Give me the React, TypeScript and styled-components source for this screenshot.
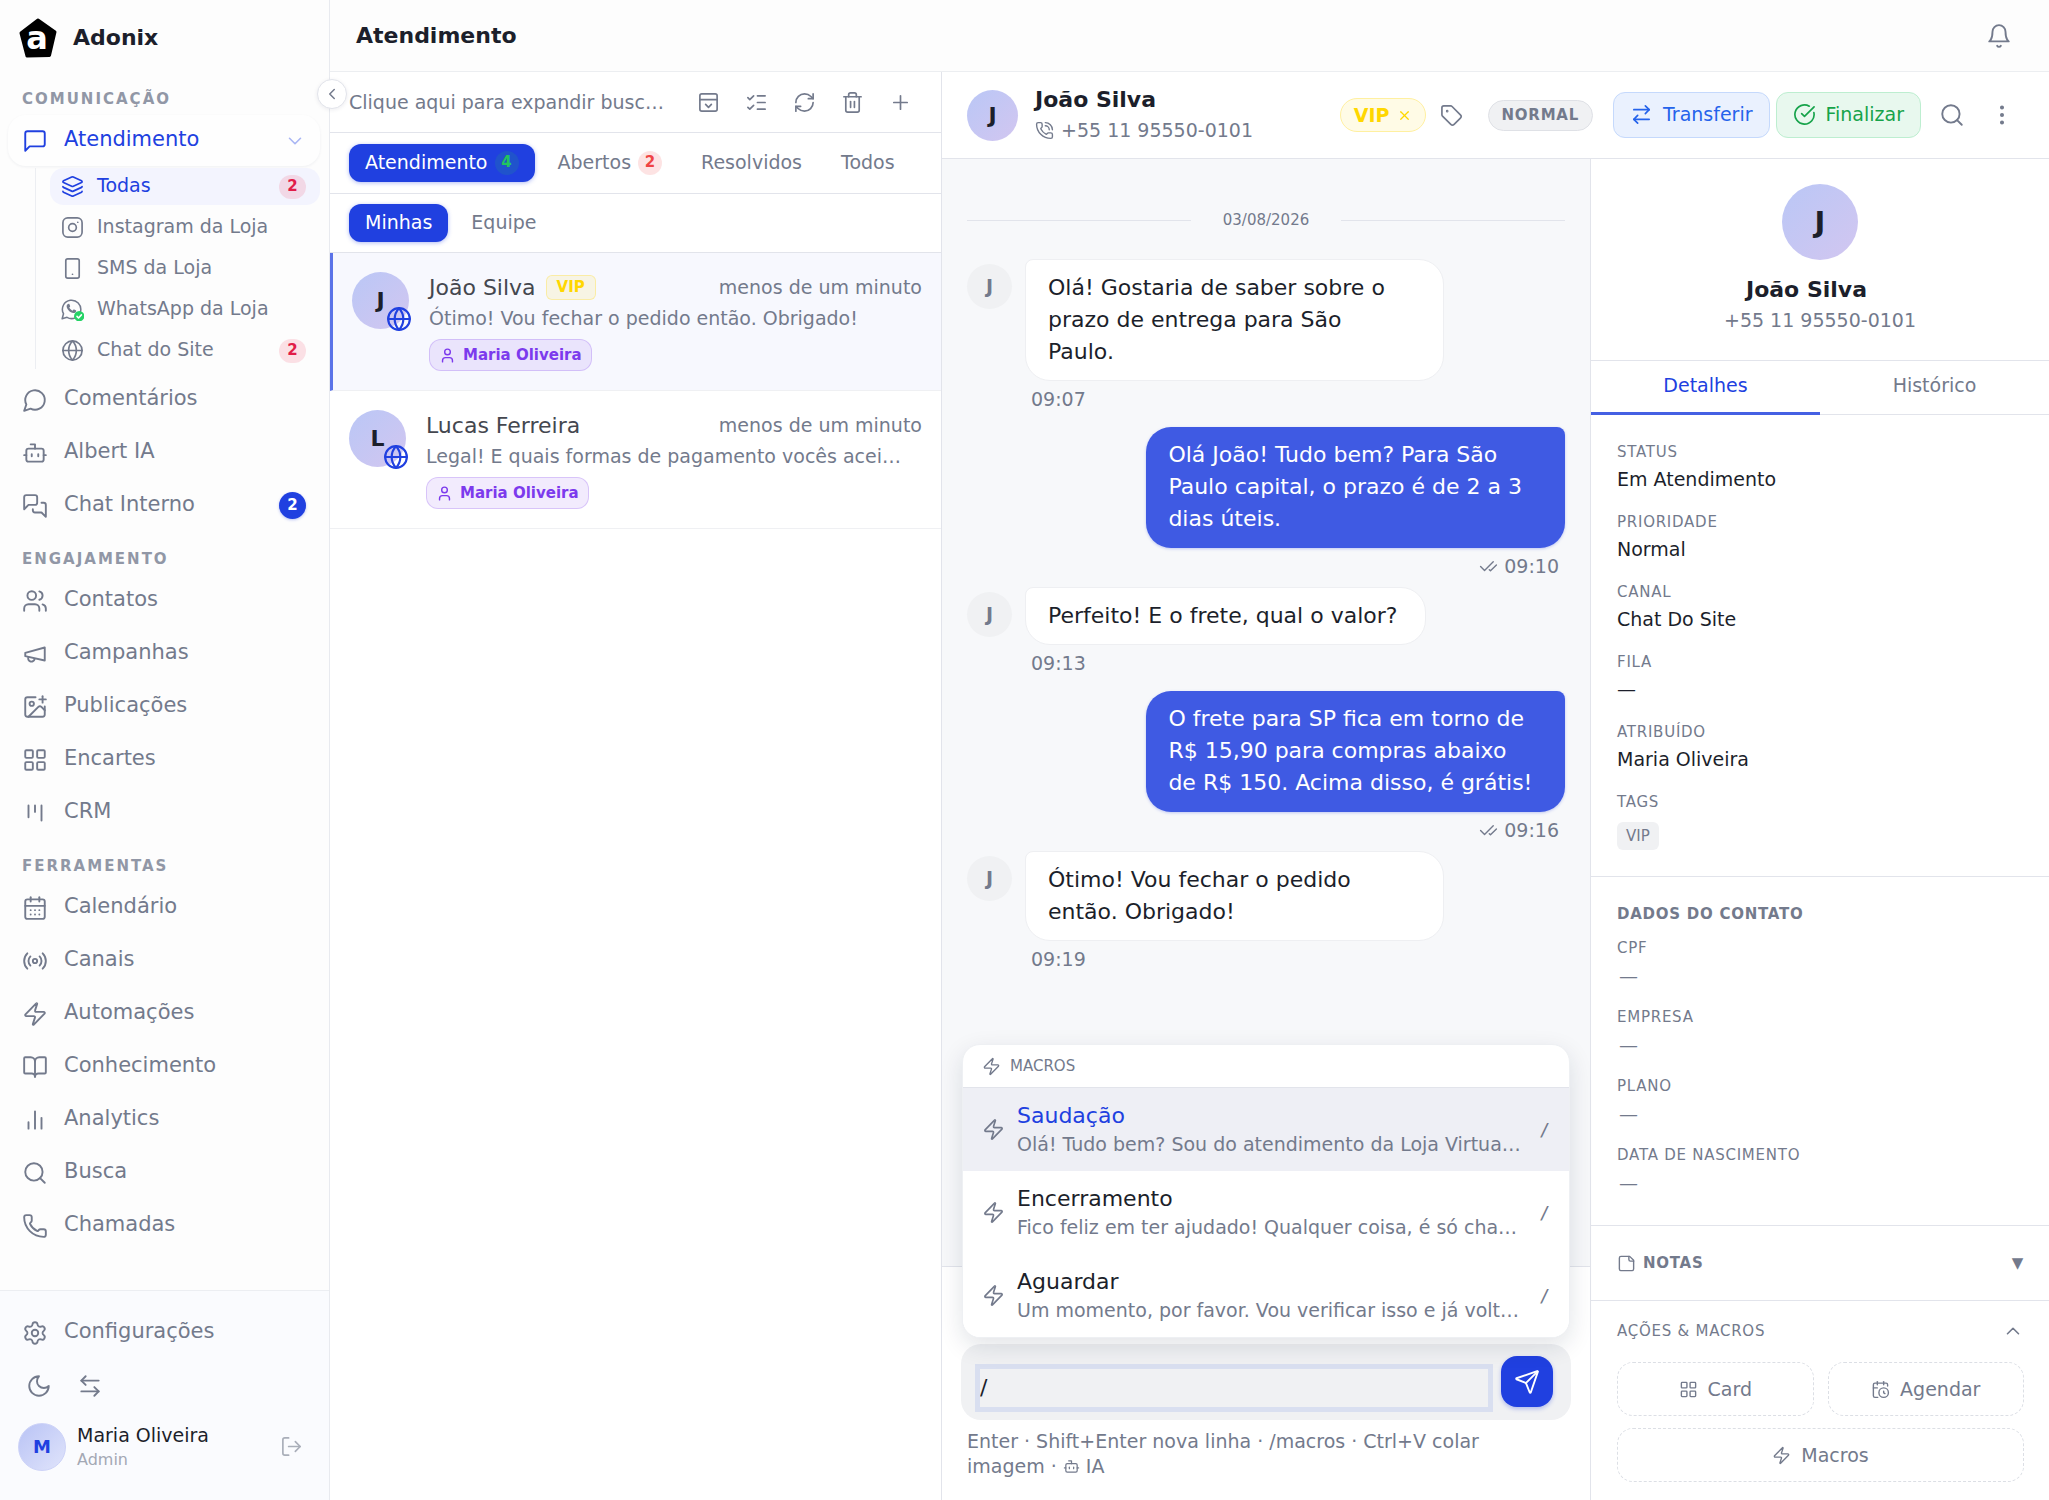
import React, { useState } from "react";
import styled, { createGlobalStyle, css } from "styled-components";
import {
  ArrowLeftRight,
  ArrowRightLeft,
  BookOpen,
  Bot,
  CalendarClock,
  CalendarDays,
  CheckCheck,
  ChevronDown,
  ChevronLeft,
  ChevronUp,
  CircleCheckBig,
  EllipsisVertical,
  Globe,
  ImagePlus,
  Layers,
  LayoutGrid,
  ListChecks,
  LogOut,
  PanelTopOpen,
  Pencil,
  Phone,
  PhoneCall,
  Plus,
  Radio,
  RefreshCw,
  Search,
  Send,
  Settings,
  Smartphone,
  Tag,
  Trash2,
  User,
  Users,
  X,
  Zap,
} from "lucide-react";

const color = {
  primary: "#2040e0",
  bubble: "#3f5ae3",
  text: "#1c1f2b",
  muted: "#737a8c",
  faint: "#9197a6",
  border: "#e2e4eb",
  soft: "#f0f1f3",
  canvas: "#f7f8fa",
  gold: "#ffd700",
  violet: "#7c3aed",
};

const GlobalStyle = createGlobalStyle`
  * { box-sizing: border-box; }
  body {
    margin: 0;
    background: #ffffff;
    color: ${color.text};
    font-family: "DejaVu Sans", Verdana, sans-serif;
    font-size: 19px;
    line-height: 27px;
  }
  button, input, textarea { font: inherit; color: inherit; }
  button { border: 0; background: none; padding: 0; margin: 0; }
  a { color: inherit; text-decoration: none; }
  h1, h2, h3, p, dl, dd, dt, ul { margin: 0; padding: 0; font-weight: inherit; }
  ul { list-style: none; }
  svg { flex: none; display: block; }
`;

/* ---------- icons ---------- */

type IconProps = { size?: number; strokeWidth?: number };

const Stroke = ({ size = 26, strokeWidth = 1.75, children }: IconProps & { children: React.ReactNode }) => (
  <svg
    width={size}
    height={size}
    viewBox="0 0 24 24"
    fill="none"
    stroke="currentColor"
    strokeWidth={strokeWidth}
    strokeLinecap="round"
    strokeLinejoin="round"
    aria-hidden="true"
  >
    {children}
  </svg>
);

const MessageSquareIcon = (p: IconProps) => (
  <Stroke {...p}>
    <path d="M21 15a2 2 0 0 1-2 2H7l-4 4V5a2 2 0 0 1 2-2h14a2 2 0 0 1 2 2z" />
  </Stroke>
);
const MessageCircleIcon = (p: IconProps) => (
  <Stroke {...p}>
    <path d="M7.9 20A9 9 0 1 0 4 16.1L2 22Z" />
  </Stroke>
);
const MessagesIcon = (p: IconProps) => (
  <Stroke {...p}>
    <path d="M14 9a2 2 0 0 1-2 2H6l-4 4V4a2 2 0 0 1 2-2h8a2 2 0 0 1 2 2z" />
    <path d="M18 9h2a2 2 0 0 1 2 2v11l-4-4h-6a2 2 0 0 1-2-2v-1" />
  </Stroke>
);
const MegaphoneIcon = (p: IconProps) => (
  <Stroke {...p}>
    <path d="m3 11 18-5v12L3 14v-3z" />
    <path d="M11.6 16.8a3 3 0 1 1-5.8-1.6" />
  </Stroke>
);
const KanbanIcon = (p: IconProps) => (
  <Stroke {...p}>
    <path d="M6 5v11M12 5v6M18 5v14" />
  </Stroke>
);
const BarsIcon = (p: IconProps) => (
  <Stroke {...p}>
    <path d="M18 20V10M12 20V4M6 20v-6" />
  </Stroke>
);
const BellIcon = (p: IconProps) => (
  <Stroke {...p}>
    <path d="M6 8a6 6 0 0 1 12 0c0 7 3 9 3 9H3s3-2 3-9" />
    <path d="M10.3 21a1.94 1.94 0 0 0 3.4 0" />
  </Stroke>
);
const InstagramIcon = (p: IconProps) => (
  <Stroke {...p}>
    <rect x="2" y="2" width="20" height="20" rx="5" />
    <circle cx="12" cy="12" r="4" />
    <path d="M17.5 6.5h.01" />
  </Stroke>
);
const StickyNoteIcon = (p: IconProps) => (
  <Stroke {...p}>
    <path d="M16 3H5a2 2 0 0 0-2 2v14a2 2 0 0 0 2 2h14a2 2 0 0 0 2-2V8Z" />
    <path d="M15 3v4a2 2 0 0 0 2 2h4" />
  </Stroke>
);
const WhatsAppIcon = ({ size = 23 }: IconProps) => (
  <svg width={size} height={size} viewBox="0 0 24 24" fill="none" aria-hidden="true">
    <path
      d="M1.2 21.6 2.6 16.4A9.6 9.6 0 1 1 6.3 20.2Z"
      stroke="currentColor"
      strokeWidth="1.6"
      strokeLinejoin="round"
    />
    <path
      d="M7.6 6.2c.5-.2 1-.1 1.2.4l.7 1.7c.1.4 0 .7-.3 1l-.6.7c.8 1.5 1.9 2.5 3.4 3.2l.8-1c.3-.3.6-.4 1-.2l1.7.8c.4.2.5.6.4 1-.4 1.4-1.6 2.1-3 1.9-3.4-.5-6.6-3.6-7-6.9-.2-1.2.5-2.3 1.7-2.6Z"
      fill="currentColor"
    />
    <circle cx="19" cy="19" r="5.4" fill="#25d366" />
    <path d="m16.7 19.2 1.6 1.6 3-3.2" stroke="#fff" strokeWidth="1.6" strokeLinecap="round" strokeLinejoin="round" />
  </svg>
);
const LogoMark = () => (
  <svg width="38" height="40" viewBox="0 0 38 40" role="img" aria-label="Adonix">
    <path
      d="M19 2 36 14 30.5 37.5 8 38 2 15Z"
      fill="#000"
      stroke="#000"
      strokeWidth="3"
      strokeLinejoin="round"
    />
    <text x="18" y="31" textAnchor="middle" fontFamily="DejaVu Sans" fontWeight="700" fontSize="32" fill="#fff">
      a
    </text>
  </svg>
);

/* ---------- shared parts ---------- */

const avatarFill = "linear-gradient(135deg, #bac7f6 0%, #d2c6f0 100%)";

const Avatar = styled.span<{ $size: number; $font: number }>`
  position: relative;
  flex: none;
  display: flex;
  align-items: center;
  justify-content: center;
  width: ${(p) => p.$size}px;
  height: ${(p) => p.$size}px;
  border-radius: 50%;
  background: ${avatarFill};
  font-size: ${(p) => p.$font}px;
  font-weight: 700;
`;

const IconButton = styled.button<{ $size?: number }>`
  display: flex;
  align-items: center;
  justify-content: center;
  width: ${(p) => p.$size ?? 48}px;
  height: ${(p) => p.$size ?? 48}px;
  color: ${color.muted};
`;

const Ellipsis = css`
  overflow: hidden;
  white-space: nowrap;
  text-overflow: ellipsis;
`;

/* ---------- shell ---------- */

const Shell = styled.div`
  display: flex;
  height: 100vh;
  overflow: hidden;
`;

const Main = styled.main`
  flex: 1;
  min-width: 0;
  display: flex;
  flex-direction: column;
`;

const TopBar = styled.header`
  flex: none;
  display: flex;
  align-items: center;
  justify-content: space-between;
  height: 72px;
  padding: 0 26px;
  background: #fdfdfd;
  border-bottom: 1px solid #eceef1;
`;

const PageTitle = styled.h1`
  font-size: 22px;
  font-weight: 700;
`;

const Workspace = styled.div`
  flex: 1;
  min-height: 0;
  display: flex;
`;

/* ---------- sidebar ---------- */

const Sidebar = styled.aside`
  position: relative;
  flex: none;
  display: flex;
  flex-direction: column;
  width: 330px;
  background: #fdfdfd;
  border-right: 1px solid #e8eaef;
`;

const Brand = styled.div`
  display: flex;
  align-items: center;
  gap: 16px;
  height: 73px;
  padding: 2px 19px 0;
  font-size: 22px;
  font-weight: 700;
`;

const CollapseButton = styled.button`
  position: absolute;
  z-index: 2;
  top: 79px;
  right: -18px;
  display: flex;
  align-items: center;
  justify-content: center;
  width: 30px;
  height: 30px;
  border: 1px solid ${color.border};
  border-radius: 50%;
  background: #fff;
  color: ${color.muted};
  box-shadow: 0 1px 4px rgba(20, 30, 60, 0.08);
`;

const NavLabel = styled.h2`
  padding: 17px 22px 7px;
  font-size: 15px;
  line-height: 18px;
  font-weight: 700;
  letter-spacing: 2px;
  color: ${color.faint};
`;

const NavLink = styled.a<{ $active?: boolean }>`
  display: flex;
  align-items: center;
  gap: 16px;
  height: 51px;
  margin: 0 9px 2px 8px;
  padding: 0 14px;
  border-radius: 18px;
  font-size: 21px;
  color: ${(p) => (p.$active ? color.primary : color.muted)};
  background: ${(p) => (p.$active ? "#fefefe" : "transparent")};
  box-shadow: ${(p) => (p.$active ? "0 1px 3px rgba(20, 30, 60, 0.06)" : "none")};

  > span:first-of-type {
    flex: 1;
    padding-bottom: 2px;
  }
`;

const Caret = styled.span`
  color: #a9b6f4;
`;

const SubNav = styled.ul`
  display: flex;
  flex-direction: column;
  gap: 4px;
  margin: 0 9px 5px 35px;
  padding-left: 14px;
  border-left: 1px solid #eceef2;
`;

const SubLink = styled.a<{ $active?: boolean }>`
  display: flex;
  align-items: center;
  gap: 13px;
  height: 37px;
  padding: 0 14px 0 11px;
  border-radius: 14px;
  color: ${(p) => (p.$active ? color.primary : color.muted)};
  background: ${(p) => (p.$active ? "#f3f4fe" : "transparent")};

  > span:first-of-type {
    flex: 1;
    padding-bottom: 2px;
  }
`;

const AlertCount = styled.span`
  width: 27px;
  height: 24px;
  border-radius: 12px;
  background: rgba(240, 30, 72, 0.13);
  color: #e11d48;
  font-size: 15px;
  line-height: 23px;
  font-weight: 700;
  text-align: center;
`;

const RoundCount = styled.span`
  width: 27px;
  height: 27px;
  border-radius: 50%;
  background: ${color.primary};
  color: #fff;
  font-size: 15px;
  line-height: 26px;
  font-weight: 700;
  text-align: center;
  box-shadow: 0 1px 3px rgba(32, 64, 224, 0.3);
`;

const SidebarFooter = styled.div`
  margin-top: auto;
  padding-top: 16px;
  border-top: 1px solid #eceef2;
  background: #fafbfe;
`;

const FooterTools = styled.div`
  display: flex;
  padding-left: 13px;
`;

const UserRow = styled.div`
  display: flex;
  align-items: center;
  gap: 11px;
  padding: 11px 18px 29px;
`;

const UserAvatar = styled(Avatar)`
  background: linear-gradient(135deg, #b9c3f5 0%, #e0e4fb 100%);
  border: 1px solid #cdd3f8;
  color: ${color.primary};
`;

const UserText = styled.div`
  flex: 1;
  display: flex;
  flex-direction: column;

  small {
    font-size: 16px;
    line-height: 22px;
    color: #a3a8b4;
  }
`;

const LogoutButton = styled.button`
  padding: 0 8px;
  color: #a9aeb9;
`;

/* ---------- conversation list ---------- */

const ListPane = styled.section`
  flex: none;
  width: 612px;
  background: #fff;
  border-right: 1px solid ${color.border};
`;

const SearchRow = styled.div`
  display: flex;
  align-items: center;
  justify-content: space-between;
  height: 61px;
  padding: 0 17px 0 19px;
  border-bottom: 1px solid ${color.border};
`;

const SearchInput = styled.input`
  width: 320px;
  border: 0;
  padding: 0;
  background: none;
  text-overflow: ellipsis;

  &::placeholder {
    color: ${color.muted};
    opacity: 1;
  }
`;

const ToolGroup = styled.div`
  display: flex;
`;

const TabRow = styled.div<{ $pad: number }>`
  display: flex;
  gap: 7px;
  padding: ${(p) => p.$pad}px 19px;
  border-bottom: 1px solid ${color.border};
`;

const PillTab = styled.button<{ $active?: boolean }>`
  display: flex;
  align-items: center;
  gap: 7px;
  height: 38px;
  padding: 0 16px 1px;
  border-radius: 12px;
  color: ${(p) => (p.$active ? "#fff" : color.muted)};
  background: ${(p) => (p.$active ? color.primary : "transparent")};
  box-shadow: ${(p) => (p.$active ? "0 1px 4px rgba(32, 64, 224, 0.35)" : "none")};
`;

const TabCount = styled.span<{ $tone: "green" | "red" }>`
  width: 24px;
  height: 24px;
  border-radius: 50%;
  font-size: 15px;
  line-height: 23px;
  font-weight: 700;
  text-align: center;
  color: ${(p) => (p.$tone === "green" ? "#22c55e" : "#ef4444")};
  background: ${(p) => (p.$tone === "green" ? "rgba(34, 197, 94, 0.15)" : "rgba(239, 68, 68, 0.15)")};
`;

const Conversation = styled.li<{ $active?: boolean }>`
  display: flex;
  gap: 20px;
  padding: 19px;
  border-bottom: 1px solid #eff0f3;
  border-left: ${(p) => (p.$active ? `3px solid #5b73e8` : "0")};
  background: ${(p) => (p.$active ? "#f7f8fe" : "#fff")};
`;

const ChannelMark = styled.span`
  position: absolute;
  right: -3px;
  bottom: -3px;
  color: ${color.primary};
`;

const ConversationBody = styled.div`
  flex: 1;
  min-width: 0;
`;

const ConversationTop = styled.div`
  display: flex;
  align-items: center;
  gap: 10px;
  height: 30px;
`;

const ConversationName = styled.h3`
  font-size: 22px;
  color: #44474f;
`;

const ConversationTime = styled.time`
  margin-left: auto;
  color: ${color.muted};
`;

const VipChip = styled.span`
  padding: 0 10px;
  border: 1px solid rgba(255, 215, 0, 0.28);
  border-radius: 6px;
  background: rgba(255, 215, 0, 0.1);
  color: ${color.gold};
  font-size: 15px;
  line-height: 23px;
  font-weight: 700;
`;

const Preview = styled.p`
  ${Ellipsis}
  margin-right: 18px;
  line-height: 32px;
  color: ${color.muted};
`;

const OwnerChip = styled.span`
  display: inline-flex;
  align-items: center;
  gap: 7px;
  height: 32px;
  margin-top: 5px;
  padding: 0 9px;
  border: 1px solid rgba(124, 58, 237, 0.22);
  border-radius: 12px;
  background: rgba(124, 58, 237, 0.1);
  color: ${color.violet};
  font-size: 15px;
  font-weight: 700;
  vertical-align: top;
`;

/* ---------- conversation ---------- */

const ThreadPane = styled.section`
  flex: 1;
  min-width: 0;
  display: flex;
  flex-direction: column;
`;

const ThreadHeader = styled.header`
  flex: none;
  display: flex;
  align-items: center;
  height: 87px;
  padding: 0 22px 0 25px;
  background: #fff;
  border-bottom: 1px solid ${color.border};
`;

const ThreadIdentity = styled.div`
  flex: 1;
  margin-left: 17px;

  h2 {
    font-size: 22px;
    line-height: 30px;
    font-weight: 700;
  }

  p {
    display: flex;
    align-items: center;
    gap: 7px;
    line-height: 30px;
    color: ${color.muted};
  }
`;

const ThreadActions = styled.div`
  display: flex;
  align-items: center;
`;

const TagPill = styled.span`
  display: flex;
  align-items: center;
  gap: 7px;
  height: 34px;
  padding: 0 13px;
  border: 1px solid #fff0a0;
  border-radius: 17px;
  background: #fffbe6;
  color: ${color.gold};
  font-weight: 700;

  button {
    color: inherit;
  }
`;

const PriorityPill = styled.span`
  height: 31px;
  margin: 0 20px 0 11px;
  padding: 0 13px;
  border: 1px solid #dfe1e6;
  border-radius: 16px;
  background: ${color.soft};
  color: ${color.muted};
  font-size: 15px;
  line-height: 28px;
  font-weight: 700;
  letter-spacing: 0.05em;
`;

const ActionButton = styled.button<{ $tone: "blue" | "green" }>`
  display: flex;
  align-items: center;
  gap: 10px;
  height: 46px;
  margin-right: 6px;
  padding: 0 16px 1px;
  border: 1px solid ${(p) => (p.$tone === "blue" ? "#c5d9fc" : "#bdeed0")};
  border-radius: 12px;
  background: ${(p) => (p.$tone === "blue" ? "#eaf1fe" : "#e8f8ee")};
  color: ${(p) => (p.$tone === "blue" ? "#2563eb" : "#16a34a")};
`;

const ThreadBody = styled.div`
  flex: 1;
  min-height: 0;
  display: flex;
`;

const ChatColumn = styled.div`
  flex: 1;
  min-width: 0;
  display: flex;
  flex-direction: column;
`;

const Messages = styled.div`
  flex: 1;
  min-height: 0;
  display: flex;
  flex-direction: column;
  gap: 7px;
  padding: 48px 25px 0;
  background: ${color.canvas};
`;

const DateDivider = styled.div`
  display: flex;
  align-items: center;
  gap: 32px;
  margin-bottom: 18px;
  font-size: 15px;
  color: ${color.muted};

  &::before,
  &::after {
    content: "";
    flex: 1;
    height: 1px;
    background: ${color.border};
  }
`;

const MessageRow = styled.article<{ $sent?: boolean }>`
  display: flex;
  gap: 13px;
  justify-content: ${(p) => (p.$sent ? "flex-end" : "flex-start")};
  padding-bottom: ${(p) => (p.$sent ? 0 : 7)}px;
`;

const MessageAvatar = styled(Avatar)`
  margin-top: 5px;
  background: ${color.soft};
  color: ${color.muted};
`;

const MessageStack = styled.div<{ $sent?: boolean }>`
  display: flex;
  flex-direction: column;
  align-items: ${(p) => (p.$sent ? "flex-end" : "flex-start")};
  width: 70%;
`;

const Bubble = styled.p<{ $sent?: boolean }>`
  font-size: 22px;
  line-height: 32px;
  white-space: pre-line;
  border-radius: 25px;
  ${(p) =>
    p.$sent
      ? css`
          padding: 12px 26px 13px 22px;
          border-top-right-radius: 8px;
          background: ${color.bubble};
          color: #fff;
          box-shadow: 0 1px 3px rgba(63, 90, 227, 0.3);
        `
      : css`
          padding: 12px 28px 12px 22px;
          border: 1px solid #eeeff2;
          border-top-left-radius: 8px;
          background: #fff;
        `}
`;

const MessageMeta = styled.div`
  display: flex;
  align-items: center;
  gap: 6px;
  padding: 5px 6px 0;
  color: ${color.muted};
`;

const Composer = styled.footer`
  flex: none;
  padding: 77px 19px 21px;
  border-top: 1px solid ${color.border};
  background: #fff;
`;

const ComposerBox = styled.div`
  position: relative;
  display: flex;
  align-items: flex-end;
  gap: 13px;
  padding: 12px 18px 13px 19px;
  border-radius: 20px;
  background: ${color.soft};
`;

const ComposerInput = styled.textarea`
  flex: 1;
  height: 38px;
  padding: 3px 0;
  border: 0;
  outline: 5px solid #d9dff0;
  background: transparent;
  font-size: 22px;
  line-height: 32px;
  resize: none;
  overflow: hidden;
`;

const SendButton = styled.button`
  display: flex;
  align-items: center;
  justify-content: center;
  width: 52px;
  height: 51px;
  border-radius: 16px;
  background: ${color.primary};
  color: #fff;
  box-shadow: 0 2px 4px rgba(32, 64, 224, 0.3);
`;

const ComposerHint = styled.p`
  padding: 9px 16px 0 6px;
  line-height: 25px;
  color: ${color.muted};

  svg {
    display: inline-block;
    vertical-align: -2px;
  }
`;

const MacroMenu = styled.div`
  position: absolute;
  z-index: 3;
  left: 1px;
  right: 1px;
  bottom: calc(100% + 6px);
  overflow: hidden;
  border: 1px solid #eef0f3;
  border-radius: 18px;
  background: #fff;
  box-shadow: 0 8px 24px rgba(20, 30, 60, 0.12);
`;

const MacroMenuTitle = styled.h3`
  display: flex;
  align-items: center;
  gap: 9px;
  height: 43px;
  padding: 0 19px;
  border-bottom: 1px solid ${color.border};
  font-size: 15px;
  color: ${color.muted};
`;

const MacroOption = styled.button<{ $active?: boolean }>`
  display: flex;
  align-items: center;
  gap: 12px;
  width: 100%;
  height: 83px;
  padding: 0 19px;
  text-align: left;
  color: ${color.muted};
  background: ${(p) => (p.$active ? "#eeeff5" : "#fff")};

  strong {
    display: block;
    font-size: 22px;
    line-height: 30px;
    font-weight: 400;
    color: ${(p) => (p.$active ? color.primary : color.text)};
  }

  code {
    margin-left: 4px;
    font-family: "DejaVu Sans Mono", monospace;
    font-size: 18px;
  }
`;

const MacroText = styled.span`
  flex: 1;
  min-width: 0;
`;

const MacroPreview = styled.span`
  ${Ellipsis}
  display: block;
`;

/* ---------- details panel ---------- */

const DetailsPane = styled.aside`
  flex: none;
  width: 459px;
  border-left: 1px solid ${color.border};
  background: #fff;
`;

const Profile = styled.div`
  display: flex;
  flex-direction: column;
  align-items: center;
  padding: 25px 0 26px;
  border-bottom: 1px solid ${color.border};

  p {
    color: ${color.muted};
  }
`;

const ProfileName = styled.div`
  display: flex;
  align-items: center;
  gap: 7px;
  margin: 15px 0 2px;

  h2 {
    font-size: 22px;
    line-height: 30px;
    font-weight: 700;
  }

  button {
    opacity: 0;
  }
  &:hover button {
    opacity: 1;
  }
`;

const DetailTabs = styled.div`
  display: flex;
  border-bottom: 1px solid ${color.border};
`;

const DetailTab = styled.button<{ $active?: boolean }>`
  flex: 1;
  height: 54px;
  padding-bottom: 2px;
  margin-bottom: -1px;
  border-bottom: 3px solid ${(p) => (p.$active ? "#4560e3" : "transparent")};
  color: ${(p) => (p.$active ? color.primary : color.muted)};
`;

const Section = styled.section`
  padding: 26px 25px 26px 26px;
  border-bottom: 1px solid ${color.border};
`;

const Caption = css`
  font-size: 15px;
  line-height: 22px;
  letter-spacing: 0.05em;
  color: ${color.muted};
`;

const Fields = styled.dl<{ $gap: number }>`
  display: flex;
  flex-direction: column;
  gap: ${(p) => p.$gap}px;

  dt {
    ${Caption}
  }
`;

const FieldValue = styled.dd`
  margin-top: 3px;
`;

const TagValue = styled.dd`
  display: flex;
  margin-top: 9px;

  span {
    padding: 0 9px;
    border-radius: 6px;
    background: ${color.soft};
    color: ${color.muted};
    font-size: 15px;
    line-height: 28px;
  }
`;

const EditableValue = styled.button`
  display: block;
  margin-top: 2px;
  padding: 2px;
  color: ${color.muted};
`;

const SectionTitle = styled.h3`
  ${Caption}
  margin-bottom: 12px;
  font-weight: 700;
`;

const Disclosure = styled.button<{ $bold?: boolean }>`
  ${Caption}
  display: flex;
  align-items: center;
  gap: 7px;
  width: 100%;
  font-weight: ${(p) => (p.$bold ? 700 : 400)};

  > :last-child {
    margin-left: auto;
  }
`;

const ActionsSection = styled.section`
  padding: 19px 25px 18px 26px;
`;

const ActionGrid = styled.div`
  display: grid;
  grid-template-columns: 1fr 1fr;
  gap: 12px 14px;
  margin-top: 20px;

  > :last-child {
    grid-column: 1 / -1;
  }
`;

const DashedButton = styled.button`
  display: flex;
  align-items: center;
  justify-content: center;
  gap: 10px;
  height: 54px;
  border: 1px dashed #dcdfe5;
  border-radius: 16px;
  color: ${color.muted};
`;

/* ---------- data ---------- */

const channels = [
  { label: "Todas", icon: <Layers size={23} strokeWidth={1.75} />, count: 2, active: true },
  { label: "Instagram da Loja", icon: <InstagramIcon size={23} /> },
  { label: "SMS da Loja", icon: <Smartphone size={23} strokeWidth={1.75} /> },
  { label: "WhatsApp da Loja", icon: <WhatsAppIcon size={23} /> },
  { label: "Chat do Site", icon: <Globe size={23} strokeWidth={1.75} />, count: 2 },
];

const navIcon = { size: 26, strokeWidth: 1.75 };

const communication = [
  { label: "Comentários", icon: <MessageCircleIcon /> },
  { label: "Albert IA", icon: <Bot {...navIcon} /> },
  { label: "Chat Interno", icon: <MessagesIcon />, count: 2 },
];

const engagement = [
  { label: "Contatos", icon: <Users {...navIcon} /> },
  { label: "Campanhas", icon: <MegaphoneIcon /> },
  { label: "Publicações", icon: <ImagePlus {...navIcon} /> },
  { label: "Encartes", icon: <LayoutGrid {...navIcon} /> },
  { label: "CRM", icon: <KanbanIcon /> },
];

const tools = [
  { label: "Calendário", icon: <CalendarDays {...navIcon} /> },
  { label: "Canais", icon: <Radio {...navIcon} /> },
  { label: "Automações", icon: <Zap {...navIcon} /> },
  { label: "Conhecimento", icon: <BookOpen {...navIcon} /> },
  { label: "Analytics", icon: <BarsIcon /> },
  { label: "Busca", icon: <Search {...navIcon} /> },
  { label: "Chamadas", icon: <Phone {...navIcon} /> },
];

const conversations = [
  { name: "João Silva", vip: true, text: "Ótimo! Vou fechar o pedido então. Obrigado!", active: true },
  { name: "Lucas Ferreira", text: "Legal! E quais formas de pagamento vocês aceitam?" },
];

const messages = [
  { text: "Olá! Gostaria de saber sobre o prazo de entrega para São\nPaulo.", time: "09:07" },
  { text: "Olá João! Tudo bem? Para São Paulo capital, o prazo é de 2 a 3 dias úteis.", time: "09:10", sent: true },
  { text: "Perfeito! E o frete, qual o valor?", time: "09:13" },
  {
    text: "O frete para SP fica em torno de R$ 15,90 para compras abaixo de R$ 150. Acima disso, é grátis!",
    time: "09:16",
    sent: true,
  },
  { text: "Ótimo! Vou fechar o pedido então. Obrigado!", time: "09:19" },
];

const macros = [
  { name: "Saudação", text: "Olá! Tudo bem? Sou do atendimento da Loja Virtual. Como posso ajudar?" },
  { name: "Encerramento", text: "Fico feliz em ter ajudado! Qualquer coisa, é só chamar." },
  { name: "Aguardar", text: "Um momento, por favor. Vou verificar isso e já volto com a resposta." },
];

const details = [
  ["STATUS", "Em Atendimento"],
  ["PRIORIDADE", "Normal"],
  ["CANAL", "Chat Do Site"],
  ["FILA", "—"],
  ["ATRIBUÍDO", "Maria Oliveira"],
];

const contactFields = ["CPF", "EMPRESA", "PLANO", "DATA DE NASCIMENTO"];

type NavItem = { label: string; icon: React.ReactNode; count?: number };

const NavList = ({ items }: { items: NavItem[] }) => (
  <>
    {items.map((item) => (
      <NavLink key={item.label} href="#">
        {item.icon}
        <span>{item.label}</span>
        {item.count && <RoundCount>{item.count}</RoundCount>}
      </NavLink>
    ))}
  </>
);

const AppSidebar = () => (
  <Sidebar>
    <Brand>
      <LogoMark />
      Adonix
    </Brand>
    <CollapseButton aria-label="Recolher menu">
      <ChevronLeft size={18} strokeWidth={2} />
    </CollapseButton>
    <nav>
      <NavLabel>COMUNICAÇÃO</NavLabel>
      <NavLink href="#" $active>
        <MessageSquareIcon />
        <span>Atendimento</span>
        <Caret>
          <ChevronDown size={22} strokeWidth={1.75} />
        </Caret>
      </NavLink>
      <SubNav>
        {channels.map((c) => (
          <li key={c.label}>
            <SubLink href="#" $active={c.active}>
              {c.icon}
              <span>{c.label}</span>
              {c.count && <AlertCount>{c.count}</AlertCount>}
            </SubLink>
          </li>
        ))}
      </SubNav>
      <NavList items={communication} />
      <NavLabel>ENGAJAMENTO</NavLabel>
      <NavList items={engagement} />
      <NavLabel>FERRAMENTAS</NavLabel>
      <NavList items={tools} />
    </nav>
    <SidebarFooter>
      <NavLink href="#">
        <Settings {...navIcon} />
        <span>Configurações</span>
      </NavLink>
      <FooterTools>
        <IconButton $size={51} aria-label="Tema escuro">
          <Stroke size={26}>
            <path d="M12 3a6 6 0 0 0 9 9 9 9 0 1 1-9-9Z" />
          </Stroke>
        </IconButton>
        <IconButton $size={51} aria-label="Alternar conta">
          <ArrowLeftRight size={26} strokeWidth={1.75} />
        </IconButton>
      </FooterTools>
      <UserRow>
        <UserAvatar $size={48} $font={18}>
          M
        </UserAvatar>
        <UserText>
          Maria Oliveira
          <small>Admin</small>
        </UserText>
        <LogoutButton aria-label="Sair">
          <LogOut size={23} strokeWidth={1.75} />
        </LogoutButton>
      </UserRow>
    </SidebarFooter>
  </Sidebar>
);

const ConversationList = () => (
  <ListPane>
    <SearchRow>
      <SearchInput aria-label="Buscar conversas" placeholder="Clique aqui para expandir busca e filtros" />
      <ToolGroup>
        <IconButton aria-label="Expandir filtros">
          <PanelTopOpen size={23} strokeWidth={1.75} />
        </IconButton>
        <IconButton aria-label="Selecionar">
          <ListChecks size={23} strokeWidth={1.75} />
        </IconButton>
        <IconButton aria-label="Atualizar">
          <RefreshCw size={23} strokeWidth={1.75} />
        </IconButton>
        <IconButton aria-label="Excluir">
          <Trash2 size={23} strokeWidth={1.75} />
        </IconButton>
        <IconButton aria-label="Nova conversa">
          <Plus size={23} strokeWidth={1.75} />
        </IconButton>
      </ToolGroup>
    </SearchRow>
    <TabRow $pad={11}>
      <PillTab $active>
        Atendimento <TabCount $tone="green">4</TabCount>
      </PillTab>
      <PillTab>
        Abertos <TabCount $tone="red">2</TabCount>
      </PillTab>
      <PillTab>Resolvidos</PillTab>
      <PillTab>Todos</PillTab>
    </TabRow>
    <TabRow $pad={10}>
      <PillTab $active>Minhas</PillTab>
      <PillTab>Equipe</PillTab>
    </TabRow>
    <ul>
      {conversations.map((c) => (
        <Conversation key={c.name} $active={c.active}>
          <Avatar $size={57} $font={22}>
            {c.name[0]}
            <ChannelMark>
              <Globe size={26} strokeWidth={2} />
            </ChannelMark>
          </Avatar>
          <ConversationBody>
            <ConversationTop>
              <ConversationName>{c.name}</ConversationName>
              {c.vip && <VipChip>VIP</VipChip>}
              <ConversationTime>menos de um minuto</ConversationTime>
            </ConversationTop>
            <Preview>{c.text}</Preview>
            <OwnerChip>
              <User size={17} strokeWidth={2} />
              Maria Oliveira
            </OwnerChip>
          </ConversationBody>
        </Conversation>
      ))}
    </ul>
  </ListPane>
);

const Thread = () => {
  const [draft, setDraft] = useState("/");
  return (
    <ChatColumn>
      <Messages>
        <DateDivider>03/08/2026</DateDivider>
        {messages.map((m) => (
          <MessageRow key={m.time} $sent={m.sent}>
            {!m.sent && (
              <MessageAvatar $size={45} $font={19}>
                J
              </MessageAvatar>
            )}
            <MessageStack $sent={m.sent}>
              <Bubble $sent={m.sent}>{m.text}</Bubble>
              <MessageMeta>
                {m.sent && <CheckCheck size={19} strokeWidth={1.75} />}
                <time>{m.time}</time>
              </MessageMeta>
            </MessageStack>
          </MessageRow>
        ))}
      </Messages>
      <Composer>
        <ComposerBox>
          <MacroMenu>
            <MacroMenuTitle>
              <Zap size={19} strokeWidth={1.75} />
              MACROS
            </MacroMenuTitle>
            {macros.map((m, i) => (
              <MacroOption key={m.name} $active={i === 0}>
                <Zap size={23} strokeWidth={1.75} />
                <MacroText>
                  <strong>{m.name}</strong>
                  <MacroPreview>{m.text}</MacroPreview>
                </MacroText>
                <code>/</code>
              </MacroOption>
            ))}
          </MacroMenu>
          <ComposerInput aria-label="Mensagem" rows={1} value={draft} onChange={(e) => setDraft(e.target.value)} />
          <SendButton aria-label="Enviar">
            <Send size={26} strokeWidth={1.75} />
          </SendButton>
        </ComposerBox>
        <ComposerHint>
          Enter · Shift+Enter nova linha · /macros · Ctrl+V colar imagem · <Bot size={17} strokeWidth={1.75} /> IA
        </ComposerHint>
      </Composer>
    </ChatColumn>
  );
};

const Details = () => (
  <DetailsPane>
    <Profile>
      <Avatar $size={76} $font={29}>
        J
      </Avatar>
      <ProfileName>
        <h2>João Silva</h2>
        <button aria-label="Editar nome">
          <Pencil size={20} strokeWidth={1.75} />
        </button>
      </ProfileName>
      <p>+55 11 95550-0101</p>
    </Profile>
    <DetailTabs>
      <DetailTab $active>Detalhes</DetailTab>
      <DetailTab>Histórico</DetailTab>
    </DetailTabs>
    <Section>
      <Fields $gap={18}>
        {details.map(([label, value]) => (
          <div key={label}>
            <dt>{label}</dt>
            <FieldValue>{value}</FieldValue>
          </div>
        ))}
        <div>
          <dt>TAGS</dt>
          <TagValue>
            <span>VIP</span>
          </TagValue>
        </div>
      </Fields>
    </Section>
    <Section>
      <SectionTitle>DADOS DO CONTATO</SectionTitle>
      <Fields $gap={14}>
        {contactFields.map((label) => (
          <div key={label}>
            <dt>{label}</dt>
            <dd>
              <EditableValue aria-label={`Editar ${label}`}>—</EditableValue>
            </dd>
          </div>
        ))}
      </Fields>
    </Section>
    <Section>
      <Disclosure $bold>
        <StickyNoteIcon size={19} />
        NOTAS
        <span>▼</span>
      </Disclosure>
    </Section>
    <ActionsSection>
      <Disclosure>
        AÇÕES &amp; MACROS
        <ChevronUp size={22} strokeWidth={1.75} />
      </Disclosure>
      <ActionGrid>
        <DashedButton>
          <LayoutGrid size={19} strokeWidth={1.75} />
          Card
        </DashedButton>
        <DashedButton>
          <CalendarClock size={19} strokeWidth={1.75} />
          Agendar
        </DashedButton>
        <DashedButton>
          <Zap size={19} strokeWidth={1.75} />
          Macros
        </DashedButton>
      </ActionGrid>
    </ActionsSection>
  </DetailsPane>
);

export default function App() {
  return (
    <>
      <GlobalStyle />
      <Shell>
        <AppSidebar />
        <Main>
          <TopBar>
            <PageTitle>Atendimento</PageTitle>
            <IconButton aria-label="Notificações">
              <BellIcon size={26} />
            </IconButton>
          </TopBar>
          <Workspace>
            <ConversationList />
            <ThreadPane>
              <ThreadHeader>
                <Avatar $size={51} $font={22}>
                  J
                </Avatar>
                <ThreadIdentity>
                  <h2>João Silva</h2>
                  <p>
                    <PhoneCall size={19} strokeWidth={1.75} />
                    +55 11 95550-0101
                  </p>
                </ThreadIdentity>
                <ThreadActions>
                  <TagPill>
                    VIP
                    <button aria-label="Remover tag VIP">
                      <X size={15} strokeWidth={2} />
                    </button>
                  </TagPill>
                  <IconButton $size={51} aria-label="Adicionar tag">
                    <Tag size={23} strokeWidth={1.75} />
                  </IconButton>
                  <PriorityPill>NORMAL</PriorityPill>
                  <ActionButton $tone="blue">
                    <ArrowRightLeft size={23} strokeWidth={1.75} />
                    Transferir
                  </ActionButton>
                  <ActionButton $tone="green">
                    <CircleCheckBig size={23} strokeWidth={1.75} />
                    Finalizar
                  </ActionButton>
                  <IconButton $size={50} aria-label="Buscar na conversa">
                    <Search size={26} strokeWidth={1.75} />
                  </IconButton>
                  <IconButton $size={50} aria-label="Mais opções">
                    <EllipsisVertical size={26} strokeWidth={1.75} />
                  </IconButton>
                </ThreadActions>
              </ThreadHeader>
              <ThreadBody>
                <Thread />
                <Details />
              </ThreadBody>
            </ThreadPane>
          </Workspace>
        </Main>
      </Shell>
    </>
  );
}
